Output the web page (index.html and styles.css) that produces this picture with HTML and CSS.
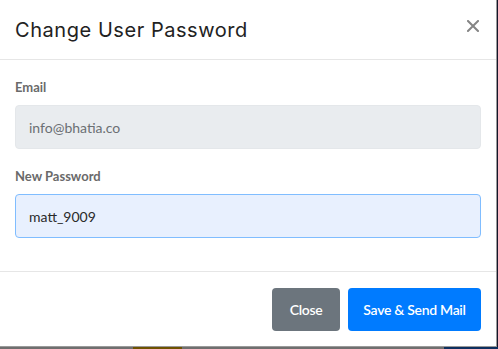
FILE: index.html
```html
<!DOCTYPE html>
<html>
<head>
<meta charset="utf-8">
<link rel="stylesheet" href="styles.css">
</head>
<body>
<div class="page">
  <div class="top">
    <div class="modal">
      <div class="modal-header">
        <h5 class="modal-title">Change User Password</h5>
        <span class="close"><svg width="12" height="12" viewBox="0 0 12 12"><path d="M1 1 L11 11 M11 1 L1 11" stroke="#858585" stroke-width="2" stroke-linecap="square" fill="none"/></svg></span>
      </div>
      <div class="modal-body">
        <div class="form-group">
          <label class="label">Email</label>
          <div class="input input-readonly">info@bhatia.co</div>
        </div>
        <div class="form-group">
          <label class="label">New Password</label>
          <div class="input input-focus">matt_9009</div>
        </div>
      </div>
      <div class="modal-footer">
        <button class="btn btn-secondary">Close</button>
        <button class="btn btn-primary">Save &amp; Send Mail</button>
      </div>
    </div>
    <div class="edge-right"></div>
  </div>
  <div class="edge-bottom">
    <span class="seg seg-gray1"></span>
    <span class="seg seg-yellow"></span>
    <span class="seg seg-gray2"></span>
    <span class="seg seg-blue"></span>
  </div>
</div>
</body>
</html>
```
FILE: styles.css
```css
* { box-sizing: border-box; }
html, body { margin: 0; padding: 0; }
body {
  width: 498px;
  height: 349px;
  overflow: hidden;
  background: #2a2a2a;
  font-family: Lato, "Liberation Sans", sans-serif;
}
.page {
  display: flex;
  flex-direction: column;
  width: 498px;
  height: 349px;
}
.top {
  display: flex;
  height: 347px;
}
.modal {
  width: 497px;
  height: 347px;
  background: #fff;
  border-right: 1px solid #9a9a9a;
  border-bottom: 1px solid #9a9a9a;
  display: flex;
  flex-direction: column;
}
.edge-right {
  flex: 1;
  background: #15152a;
}
.edge-bottom {
  display: flex;
  height: 2px;
}
.seg { display: block; height: 2px; }
.seg-gray1 { width: 133px; background: #6f6f6f; }
.seg-yellow { width: 49px; background: #6e5200; }
.seg-gray2 { width: 262px; background: #6f6f6f; }
.seg-blue { flex: 1; background: #0d2f5e; }

.modal-header {
  height: 60px;
  border-bottom: 1px solid #e6e6e6;
  display: flex;
  align-items: center;
  justify-content: space-between;
  padding: 0 17px 0 15px;
}
.modal-title {
  margin: 0;
  font-family: Inter, "Open Sans", sans-serif;
  font-weight: 400;
  font-size: 20px;
  color: #222;
  letter-spacing: 0.55px;
  padding-top: 1px;
}
.close {
  display: flex;
  width: 12px;
  height: 12px;
  margin-bottom: 7px;
}
.modal-body {
  padding: 17px 15px 0 15px;
  height: 211px;
}
.form-group {
  display: flex;
  flex-direction: column;
  margin-bottom: 17px;
}
.label {
  font-size: 13px;
  font-weight: 700;
  color: #6a6a6a;
  line-height: 20px;
  margin-bottom: 8px;
}
.input {
  height: 44px;
  border-radius: 4px;
  padding: 0 13px;
  display: flex;
  align-items: center;
  font-size: 14px;
}
.input-readonly {
  background: #e9ecef;
  border: 1px solid #e4e7ea;
  color: #6b6f73;
}
.input-focus {
  background: #e8f0fe;
  border: 1px solid #80bdff;
  color: #2a2a2a;
}
.modal-footer {
  border-top: 1px solid #e6e6e6;
  flex: 1;
  display: flex;
  justify-content: flex-end;
  align-items: flex-start;
  gap: 8px;
  padding: 16px 15px 0 15px;
}
.btn {
  height: 43px;
  border: none;
  border-radius: 4px;
  padding: 0;
  font-family: Lato, "Liberation Sans", sans-serif;
  font-size: 14px;
  font-weight: 600;
  color: #fff;
  letter-spacing: -0.3px;
}
.btn-secondary { background: #6c757d; width: 68px; }
.btn-primary { background: #007bff; width: 133px; }
```
